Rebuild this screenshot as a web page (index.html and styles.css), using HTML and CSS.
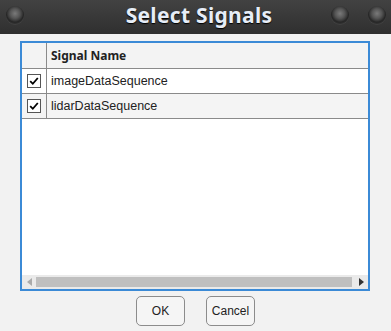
FILE: index.html
```html
<!DOCTYPE html>
<html>
<head>
<meta charset="utf-8">
<link rel="stylesheet" href="styles.css">
</head>
<body>
<div class="window">
  <div class="titlebar">
    <span class="knobs-left"><span class="knob"></span></span>
    <span class="title">Select Signals</span>
    <span class="knobs-right"><span class="knob"></span><span class="knob"></span></span>
  </div>
  <div class="content">
    <div class="table">
      <div class="row header">
        <div class="cell chk"></div>
        <div class="cell name">Signal Name</div>
      </div>
      <div class="row odd">
        <div class="cell chk"><span class="box"><svg viewBox="0 0 12 12" width="12" height="12"><path d="M2.2 6.2 L4.8 8.8 L9.8 3" fill="none" stroke="#000" stroke-width="1.8"/></svg></span></div>
        <div class="cell name">imageDataSequence</div>
      </div>
      <div class="row even">
        <div class="cell chk"><span class="box"><svg viewBox="0 0 12 12" width="12" height="12"><path d="M2.2 6.2 L4.8 8.8 L9.8 3" fill="none" stroke="#000" stroke-width="1.8"/></svg></span></div>
        <div class="cell name">lidarDataSequence</div>
      </div>
      <div class="filler"></div>
      <div class="hscroll">
        <span class="arrow arrow-left"></span>
        <span class="track"><span class="thumb"></span></span>
        <span class="arrow arrow-right"></span>
      </div>
    </div>
    <div class="buttons">
      <button class="btn">OK</button>
      <button class="btn">Cancel</button>
    </div>
  </div>
</div>
</body>
</html>
```
FILE: styles.css
```css
html, body { margin: 0; padding: 0; }
body { width: 391px; height: 331px; background: #f2f2f2; overflow: hidden; font-family: "Liberation Sans", Arial, sans-serif; }
.window { display: flex; flex-direction: column; height: 331px; }
.titlebar {
  height: 34px; flex: none; display: grid; grid-template-columns: 1fr auto 1fr; align-items: center;
  background: linear-gradient(#424242, #2f2f2f);
  padding: 0 5px 0 6px; box-sizing: border-box;
}
.title {
  font-family: "Noto Sans", "DejaVu Sans", sans-serif; font-weight: bold; font-size: 21px;
  color: #e6edf7; text-shadow: 0 1px 1px #000; letter-spacing: 0.3px;
  margin-left: 6px; margin-top: -4px;
}
.knobs-left { display: flex; }
.knobs-right { display: flex; gap: 19px; justify-content: flex-end; }
.knob {
  width: 18px; height: 18px; border-radius: 50%; display: block; margin-top: -5px;
  background: radial-gradient(circle at 50% 42%, #7a7a7a 0%, #555 35%, #3a3a3a 52%, #262626 62%, #333 76%, #565656 100%);
  box-shadow: 0 1px 0 rgba(255,255,255,0.06);
}
.content { flex: 1; display: flex; flex-direction: column; align-items: center; padding-top: 7px; }
.table {
  width: 350px; height: 250px; box-sizing: border-box; border: 2px solid #3b8ad6;
  background: #fff; display: flex; flex-direction: column; margin-left: -1px;
}
.row { display: flex; height: 25px; border-bottom: 1px solid #8a8a8a; box-sizing: border-box; }
.row.header { height: 26px; background: #f3f3f3; }
.row.header .name { font-family: "Noto Sans", "DejaVu Sans", sans-serif; font-weight: bold; font-size: 12px; color: #222; }
.row.odd { background: #fff; }
.row.even { background: #f4f4f4; }
.cell { display: flex; align-items: center; }
.chk { width: 24px; border-right: 1px solid #8a8a8a; justify-content: center; flex: none; }
.name { padding-left: 4px; font-size: 12.5px; color: #222; }
.box { width: 12px; height: 12px; border: 1px solid #555; background: #fff; display: flex; align-items: center; justify-content: center; }
.box svg { display: block; }
.filler { flex: 1; }
.hscroll { height: 14px; background: #eaeaea; display: flex; align-items: center; }
.arrow { width: 14px; height: 14px; display: flex; align-items: center; justify-content: center; flex: none; }
.arrow-left::before { content: ""; border-right: 5px solid #aaa; border-top: 4px solid transparent; border-bottom: 4px solid transparent; }
.arrow-right::before { content: ""; border-left: 5px solid #333; border-top: 4px solid transparent; border-bottom: 4px solid transparent; }
.track { flex: 1; height: 10px; display: flex; }
.thumb { flex: 1; background: #bfbfbf; margin-right: 2px; }
.buttons { display: flex; gap: 21px; margin-top: 5px; }
.btn {
  width: 49px; height: 30px; border: 1px solid #8c8c8c; border-radius: 5px;
  background: #f5f5f5; font-family: "Liberation Sans", Arial, sans-serif; font-size: 12px; color: #222; padding: 0;
}
```
